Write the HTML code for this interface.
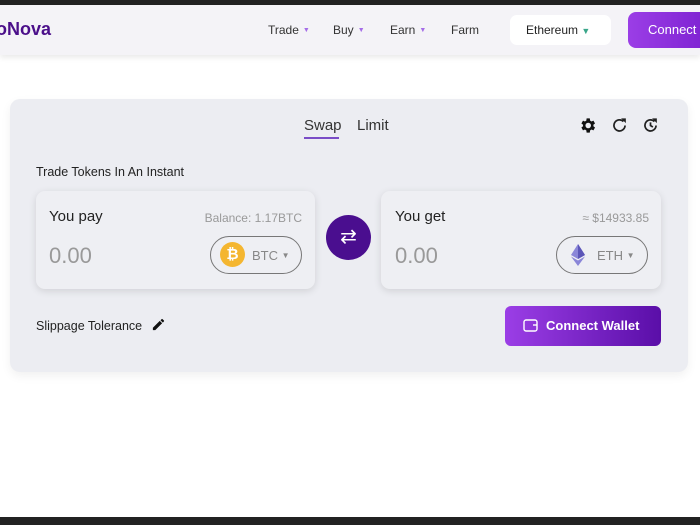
<!DOCTYPE html>
<html><head><style>
*{margin:0;padding:0;box-sizing:border-box}
body{width:700px;height:525px;background:#fff;font-family:"Liberation Sans",sans-serif;position:relative;overflow:hidden;color:#222}
.abs{position:absolute}
.top{left:0;top:0;width:700px;height:5px;background:#222}
.bot{left:0;top:517px;width:700px;height:8px;background:#222}
.hdr{left:0;top:5px;width:700px;height:50px;background:#f4f3f7;box-shadow:0 3px 5px rgba(0,0,0,.08)}
.nav{font-size:12px;color:#333;top:23px}
.caret{color:#a56de8;font-size:7px;margin-left:4px;vertical-align:2px}
.card{left:10px;top:99px;width:678px;height:273px;background:#ecedf2;border-radius:10px;box-shadow:0 4px 10px rgba(0,0,0,.06)}
.box{top:191px;width:279px;height:98px;background:#eeeff3;border-radius:9px;box-shadow:0 2px 8px rgba(0,0,0,.12)}
.pill{width:92px;height:38px;border:1.5px solid #777;border-radius:19px;top:236px}
</style></head><body>
<div class="abs top"></div>
<div class="abs hdr"></div>
<div class="abs" style="left:-4px;top:19px;font-size:18px;font-weight:bold;color:#4b0f8a">oNova</div>
<div class="abs nav" style="left:268px">Trade<span class="caret">▼</span></div>
<div class="abs nav" style="left:333px">Buy<span class="caret">▼</span></div>
<div class="abs nav" style="left:390px">Earn<span class="caret">▼</span></div>
<div class="abs nav" style="left:451px">Farm</div>
<div class="abs" style="left:510px;top:15px;width:101px;height:30px;background:#fff;border-radius:7px;font-size:12px;padding:8px 0 0 16px">Ethereum <span style="color:#3aa68a;font-size:9px">▼</span></div>
<div class="abs" style="left:628px;top:12px;width:90px;height:36px;background:linear-gradient(90deg,#9b3ee6,#7a1fcf);border-radius:8px;color:#fff;font-size:13px;padding:10px 0 0 20px">Connect</div>

<div class="abs card"></div>
<div class="abs" style="left:304px;top:117px;font-size:15px;color:#333">Swap</div>
<div class="abs" style="left:304px;top:137px;width:35px;height:2px;background:#7a4dc7"></div>
<div class="abs" style="left:357px;top:117px;font-size:15px;color:#333">Limit</div>
<svg class="abs" style="left:578px;top:116px" width="19" height="19" viewBox="0 0 24 24"><path fill="#111" d="M19.4 13a7.5 7.5 0 0 0 0-2l2.1-1.6-2-3.5-2.5 1a7 7 0 0 0-1.7-1L14.9 3h-4l-.4 2.9a7 7 0 0 0-1.7 1l-2.5-1-2 3.5L6.4 11a7.5 7.5 0 0 0 0 2l-2.1 1.6 2 3.5 2.5-1a7 7 0 0 0 1.7 1l.4 2.9h4l.4-2.9a7 7 0 0 0 1.7-1l2.5 1 2-3.5zM12.9 15.5a3.5 3.5 0 1 1 0-7 3.5 3.5 0 0 1 0 7z"/></svg>
<svg class="abs" style="left:610px;top:116px" width="19" height="19" viewBox="0 0 24 24"><path fill="none" stroke="#222" stroke-width="2.2" d="M19 12a7 7 0 1 1-2-5"/><path fill="#222" d="M14 3h6v6z"/></svg>
<svg class="abs" style="left:641px;top:116px" width="19" height="19" viewBox="0 0 24 24"><path fill="none" stroke="#222" stroke-width="2.2" d="M19 12a7 7 0 1 1-2-5M12 8v4l3 2"/><path fill="#222" d="M14 3h6v6z"/></svg>
<div class="abs" style="left:36px;top:165px;font-size:12.5px;color:#222">Trade Tokens In An Instant</div>

<div class="abs box" style="left:36px"></div>
<div class="abs" style="left:49px;top:208px;font-size:15px;color:#222">You pay</div>
<div class="abs" style="left:150px;width:152px;text-align:right;top:211px;font-size:12px;color:#999">Balance: 1.17BTC</div>
<div class="abs" style="left:49px;top:243px;font-size:22px;color:#999">0.00</div>
<div class="abs pill" style="left:210px"></div>
<div class="abs" style="left:220px;top:242px;width:25px;height:25px;border-radius:50%;background:#f4b630;color:#fff;font-weight:bold;font-size:15px;text-align:center;line-height:25px">₿</div>
<div class="abs" style="left:252px;top:248px;font-size:13px;color:#888">BTC <span style="font-size:8px;vertical-align:2px">▼</span></div>

<div class="abs" style="left:326px;top:215px;width:45px;height:45px;border-radius:50%;background:#4a0e8f;color:#fff;font-size:20px;text-align:center;line-height:44px">⇄</div>

<div class="abs box" style="left:381px;width:280px"></div>
<div class="abs" style="left:395px;top:208px;font-size:15px;color:#222">You get</div>
<div class="abs" style="left:548px;width:101px;text-align:right;top:211px;font-size:12px;color:#999">≈ $14933.85</div>
<div class="abs" style="left:395px;top:243px;font-size:22px;color:#999">0.00</div>
<div class="abs pill" style="left:556px"></div>
<svg class="abs" style="left:571px;top:244px" width="14" height="22" viewBox="0 0 14 22"><path fill="#8a86d8" d="M7 0L0 11l7 4 7-4z"/><path fill="#5c56b8" d="M7 0v15l7-4z"/><path fill="#8a86d8" d="M0 12.5L7 22l7-9.5-7 4z"/></svg>
<div class="abs" style="left:597px;top:248px;font-size:13px;color:#888">ETH <span style="font-size:8px;vertical-align:2px">▼</span></div>

<div class="abs" style="left:36px;top:319px;font-size:12.5px;color:#222">Slippage Tolerance</div>
<svg class="abs" style="left:151px;top:317px" width="15" height="15" viewBox="0 0 24 24"><path fill="#111" d="M3 17.2V21h3.8L17.8 10l-3.8-3.8zM20.7 7a1 1 0 0 0 0-1.4l-2.3-2.3a1 1 0 0 0-1.4 0l-1.8 1.8 3.8 3.8z"/></svg>
<div class="abs" style="left:505px;top:306px;width:156px;height:40px;border-radius:6px;background:linear-gradient(90deg,#9b3ee6,#5a0ea8);color:#fff;font-size:13px;font-weight:bold;padding:12px 0 0 41px">Connect Wallet</div>
<svg class="abs" style="left:523px;top:318px" width="15" height="14" viewBox="0 0 15 14"><rect x="1" y="2" width="13" height="11" rx="2" fill="none" stroke="#fff" stroke-width="1.4"/><path d="M10 7h4" stroke="#fff" stroke-width="1.4"/></svg>
<div class="abs bot"></div>
</body></html>
